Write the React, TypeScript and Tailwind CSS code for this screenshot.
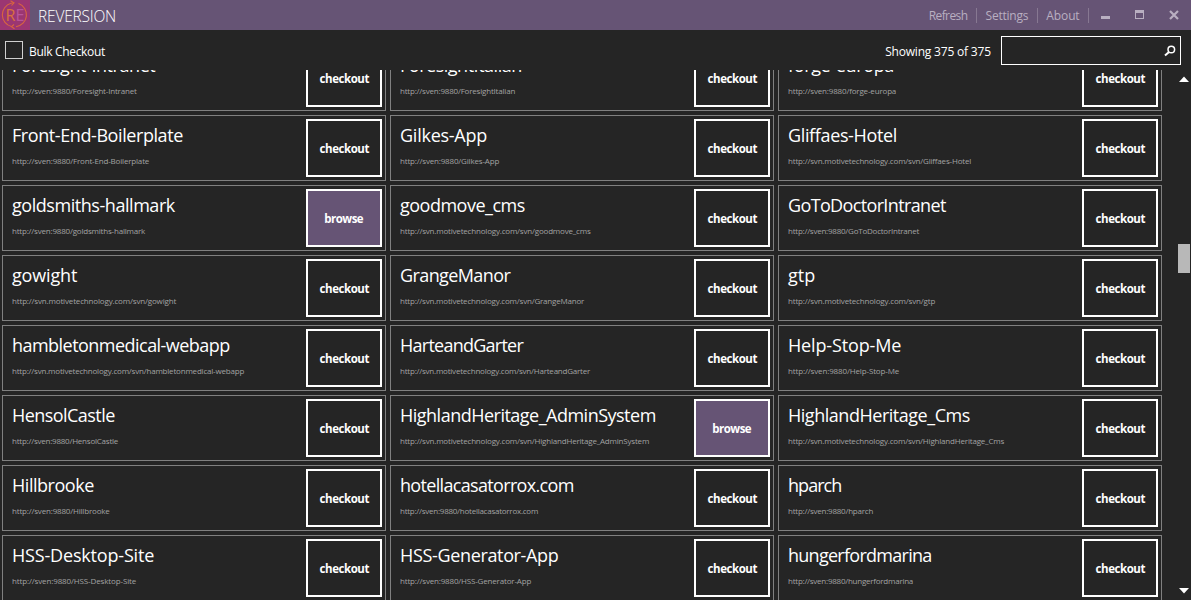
import React, { useLayoutEffect, useRef, useState } from "react";

type Repo = { name: string; url: string; nameWidth: number; urlWidth: number; local?: boolean };

const SVEN = "http://sven:9880/";
const SVN = "http://svn.motivetechnology.com/svn/";

const repo = (name: string, base: string, nameWidth: number, urlWidth: number, local = false): Repo => ({
  name,
  url: base + name,
  nameWidth,
  urlWidth,
  local,
});

const repos: Repo[] = [
  repo("Foresight-Intranet", SVEN, 143.5, 124.5),
  repo("ForesightItalian", SVEN, 122, 115),
  repo("forge-europa", SVEN, 106, 108),
  repo("Front-End-Boilerplate", SVEN, 171, 137),
  repo("Gilkes-App", SVEN, 87, 99),
  repo("Gliffaes-Hotel", SVN, 109, 183),
  repo("goldsmiths-hallmark", SVEN, 163, 133, true),
  repo("goodmove_cms", SVN, 125, 190.5),
  repo("GoToDoctorIntranet", SVEN, 158, 131),
  repo("gowight", SVN, 65, 164),
  repo("GrangeManor", SVN, 110.5, 184),
  repo("gtp", SVN, 27, 147),
  repo("hambletonmedical-webapp", SVN, 218, 232),
  repo("HarteandGarter", SVN, 123.5, 190),
  repo("Help-Stop-Me", SVEN, 113, 111),
  repo("HensolCastle", SVEN, 103, 106),
  repo("HighlandHeritage_AdminSystem", SVN, 256, 249, true),
  repo("HighlandHeritage_Cms", SVN, 182, 216),
  repo("Hillbrooke", SVEN, 82, 97.5),
  repo("hotellacasatorrox.com", SVEN, 174, 138),
  repo("hparch", SVEN, 54, 85),
  repo("HSS-Desktop-Site", SVEN, 142, 124),
  repo("HSS-Generator-App", SVEN, 158.5, 131),
  repo("hungerfordmarina", SVEN, 144, 125),
];

/** Sets a line of text to the given width by adjusting its tracking. */
function Fit({ text, width }: { text: string; width: number }) {
  const ref = useRef<HTMLSpanElement>(null);
  const [spacing, setSpacing] = useState(0);
  useLayoutEffect(() => {
    const natural = ref.current!.getBoundingClientRect().width - spacing * text.length;
    setSpacing((width + 0.3 - natural) / (text.length - 1));
  }, [text, width]);
  return (
    <span ref={ref} className="inline-block whitespace-nowrap" style={{ letterSpacing: spacing, marginRight: -spacing }}>
      {text}
    </span>
  );
}

function Logo() {
  return (
    <div className="relative h-[30px] w-[30px] bg-[#9b3672]">
      <svg className="absolute inset-0" width="30" height="30" viewBox="0 0 30 30" fill="none" stroke="#d9653f" strokeWidth="1.1">
        <path d="M11 3.3A12 12 0 0 0 11.5 26.5M16 26.700A12 12 0 0 0 18.500 3.500M11 3.300L13.500 2.800" />
        <path d="M10.500 0.800L14 2.800L11.500 5.500M14 24.500L11.500 26.700L14.500 28.800" />
      </svg>
      <div className="relative flex h-full items-center justify-center text-[16px] leading-none">
        <span className="text-[#d9703f]">R</span>
        <span className="text-[#b9559a]">E</span>
      </div>
    </div>
  );
}

function TitleBar() {
  return (
    <header className="flex h-[30px] shrink-0 items-center bg-[#665475]">
      <Logo />
      <h1 className="ml-2 pt-px text-[15.5px] leading-[30px] font-light text-white">
        <Fit text="REVERSION" width={78} />
      </h1>
      <nav className="ml-auto flex items-center text-[12px] leading-[16px] text-[#b9afc1]">
        <span className="mt-[2px] mr-[8px]"><Fit text="Refresh" width={39} /></span>
        <i className="h-[15px] w-px bg-[#877892]" />
        <span className="mt-[2px] w-[60px] text-center"><Fit text="Settings" width={42.5} /></span>
        <i className="h-[15px] w-px bg-[#877892]" />
        <span className="mt-[2px] w-[50px] text-center"><Fit text="About" width={33} /></span>
        <i className="h-[15px] w-px bg-[#877892]" />
      </nav>
      <svg className="shrink-0" width="102" height="30" viewBox="0 0 102 30" shapeRendering="crispEdges">
        <path fill="#b9afc1" d="M12 16h9v3h-9zM46 10h9v9h-9zM47 13v5h7v-5z" fillRule="evenodd" />
        <path d="M81 11l8 8M89 11l-8 8" stroke="#b9afc1" strokeWidth="2.2" shapeRendering="auto" />
      </svg>
    </header>
  );
}

function Toolbar() {
  return (
    <div className="flex h-10 shrink-0 items-center pl-[5px] pr-[10px] text-[12px] text-white">
      <span className="h-[18px] w-[18px] border border-[#d0d0d0]" />
      <span className="mt-[3px] ml-[6px]"><Fit text="Bulk Checkout" width={76} /></span>
      <span className="mt-[3px] ml-auto"><Fit text="Showing 375 of 375" width={105.5} /></span>
      <div className="ml-[10px] mt-px flex h-[29px] w-[180px] items-center justify-end border border-white pr-[4px]">
        <svg width="12" height="12" viewBox="0 0 12 12" fill="none" stroke="#fff">
          <circle cx="7.300" cy="4.500" r="3.300" strokeWidth="1.500" />
          <path d="M5 6.900L1 10.500" strokeWidth="2" />
        </svg>
      </div>
    </div>
  );
}

function Card({ name, url, nameWidth, urlWidth, local }: Repo) {
  return (
    <article className="flex h-[66px] w-[384px] justify-between border border-[#808080] py-[3px] pl-[9px] pr-[3px]">
      <div className="flex flex-col">
        <h2 className="mt-[3px] h-[26px] text-[18px] leading-[26px] text-white">
          <Fit text={name} width={nameWidth} />
        </h2>
        <p className="mt-[7px] h-[12px] text-[8px] leading-[12px] text-[#a3a3a3]">
          <Fit text={url} width={urlWidth} />
        </p>
      </div>
      {local ? (
        <button className="h-[58px] w-[76px] border-2 border-white bg-[#665475] pt-[2px] text-[11.5px] font-bold text-white">
          <Fit text="browse" width={39} />
        </button>
      ) : (
        <button className="h-[58px] w-[76px] border-2 border-white pt-[2px] pl-px text-[11.5px] font-bold text-white">
          <Fit text="checkout" width={49.5} />
        </button>
      )}
    </article>
  );
}

export default function App() {
  return (
    <div className="flex h-[600px] w-[1191px] flex-col overflow-hidden bg-[#252525] font-['Open_Sans',sans-serif]">
      <TitleBar />
      <Toolbar />
      <main className="flex min-h-0 flex-1">
        <div className="w-[1178px] overflow-hidden">
          <div className="-mt-[25px] grid grid-cols-[384px_384px_384px] gap-1 pl-[2px]">
            {repos.map((r) => (
              <Card key={r.name} {...r} />
            ))}
          </div>
        </div>
        <div className="flex w-3 flex-col items-center">
          <svg className="mt-[6px] shrink-0" width="10" height="6" viewBox="0 0 10 6"><path d="M0 6L5 0.500L10 6z" fill="#fff" /></svg>
          <div className="mt-[162px] h-[29px] w-3 bg-[#b8b8b8]" />
          <svg className="mt-auto mb-[6px] shrink-0" width="10" height="6" viewBox="0 0 10 6"><path d="M0 0L5 5.500L10 0z" fill="#fff" /></svg>
        </div>
      </main>
    </div>
  );
}
